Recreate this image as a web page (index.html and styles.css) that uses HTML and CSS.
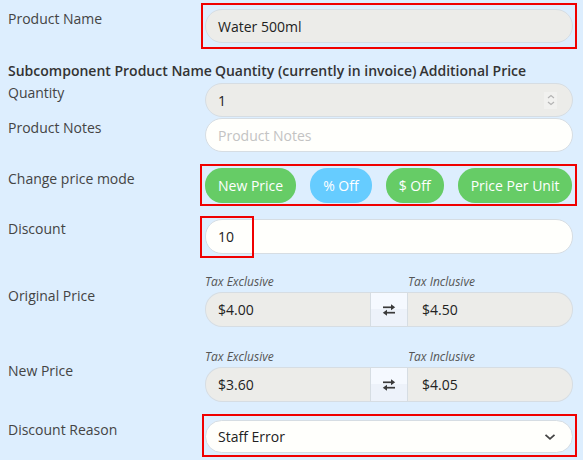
FILE: index.html
```html
<!DOCTYPE html>
<html>
<head>
<meta charset="utf-8">
<link rel="stylesheet" href="styles.css">
</head>
<body>
<div class="form">
  <div class="row r-name">
    <div class="label">Product Name</div>
    <div class="field">
      <div class="hl hl-name"><div class="input grey">Water 500ml</div></div>
    </div>
  </div>

  <div class="header">
    <span>Subcomponent Product Name</span>
    <span>Quantity (currently in invoice)</span>
    <span>Additional Price</span>
  </div>

  <div class="row r-qty">
    <div class="label">Quantity</div>
    <div class="field">
      <div class="input grey spread">
        <span>1</span>
        <span class="spin">
          <svg width="8" height="12" viewBox="0 0 8 12"><path d="M1 4 L4 1.5 L7 4 M1 8 L4 10.5 L7 8" fill="none" stroke="#b4b4b4" stroke-width="1.2"/></svg>
        </span>
      </div>
    </div>
  </div>

  <div class="row r-notes">
    <div class="label">Product Notes</div>
    <div class="field">
      <div class="input white placeholder">Product Notes</div>
    </div>
  </div>

  <div class="row r-mode">
    <div class="label">Change price mode</div>
    <div class="field">
      <div class="hl hl-mode">
        <div class="btns">
          <span class="btn green">New Price</span>
          <span class="btn blue">% Off</span>
          <span class="btn green">$ Off</span>
          <span class="btn green">Price Per Unit</span>
        </div>
      </div>
    </div>
  </div>

  <div class="row r-disc">
    <div class="label">Discount</div>
    <div class="field">
      <div class="input white disc">10<span class="hl-disc"></span></div>
    </div>
  </div>

  <div class="row r-orig">
    <div class="label">Original Price</div>
    <div class="field">
      <div class="tax-labels"><span class="tax">Tax Exclusive</span><span class="tax">Tax Inclusive</span></div>
      <div class="group">
        <div class="input grey left">$4.00</div>
        <div class="swap">
          <svg width="14" height="12" viewBox="0 0 14 12"><path d="M1 3.3 H9.5" stroke="#3a3a3a" stroke-width="1.7"/><path d="M9 0.3 L13.2 3.3 L9 6.3 Z" fill="#3a3a3a"/><path d="M13 8.7 H4.5" stroke="#3a3a3a" stroke-width="1.7"/><path d="M5 5.7 L0.8 8.7 L5 11.7 Z" fill="#3a3a3a"/></svg>
        </div>
        <div class="input grey right">$4.50</div>
      </div>
    </div>
  </div>

  <div class="row r-new">
    <div class="label">New Price</div>
    <div class="field">
      <div class="tax-labels"><span class="tax">Tax Exclusive</span><span class="tax">Tax Inclusive</span></div>
      <div class="group">
        <div class="input grey left">$3.60</div>
        <div class="swap">
          <svg width="14" height="12" viewBox="0 0 14 12"><path d="M1 3.3 H9.5" stroke="#3a3a3a" stroke-width="1.7"/><path d="M9 0.3 L13.2 3.3 L9 6.3 Z" fill="#3a3a3a"/><path d="M13 8.7 H4.5" stroke="#3a3a3a" stroke-width="1.7"/><path d="M5 5.7 L0.8 8.7 L5 11.7 Z" fill="#3a3a3a"/></svg>
        </div>
        <div class="input grey right">$4.05</div>
      </div>
    </div>
  </div>

  <div class="row r-reason">
    <div class="label">Discount Reason</div>
    <div class="field">
      <div class="hl hl-reason">
        <div class="input white spread sel">
          <span>Staff Error</span>
          <svg width="12" height="8" viewBox="0 0 12 8"><path d="M1.5 1.8 L6 5.8 L10.5 1.8" fill="none" stroke="#444" stroke-width="1.8"/></svg>
        </div>
      </div>
    </div>
  </div>
</div>
</body>
</html>
```

FILE: styles.css
```css
html, body {
  margin: 0;
  padding: 0;
  background: #ddeefe;
}
body {
  font-family: "Open Sans", "Noto Sans", sans-serif;
  font-size: 14px;
  line-height: 19px;
  color: #444;
  width: 583px;
  height: 460px;
  overflow: hidden;
}
.form {
  padding: 3px 10px 0 8px;
}
.row {
  display: flex;
}
.label {
  width: 197px;
  flex: none;
  color: #444;
}
.field {
  width: 368px;
  flex: none;
}
.input {
  box-sizing: border-box;
  height: 34px;
  border: 1px solid #d6dde3;
  border-radius: 17px;
  padding: 0 12px;
  display: flex;
  align-items: center;
  color: #222;
}
.grey { background: #ecece9; }
.white { background: #fffffc; }
.placeholder { color: #c3c3c3; }
.spread { justify-content: space-between; }

.hl {
  border: 2px solid #f00000;
}
.hl-name {
  margin: 0 -4px;
  padding: 4px 2px;
}
.r-name .label { padding-top: 6px; }

.header {
  margin-top: 12px;
  display: flex;
  gap: 3px;
  font-weight: 600;
  color: #333;
}

.r-qty { margin-top: 3px; }
.spin {
  width: 13px;
  height: 17px;
  background: #f1f1ef;
  display: flex;
  align-items: center;
  justify-content: center;
  margin-right: 3px;
}
.r-notes { margin-top: 1px; }

.r-mode { margin-top: 12px; }
.r-mode .label { padding-top: 5px; }
.hl-mode {
  margin: 0 -4px 0 -5px;
  padding: 2px 2px 1px 3px;
}
.btns {
  display: flex;
  gap: 14px;
}
.btn {
  height: 35px;
  border-radius: 17px;
  padding: 0 13px;
  display: flex;
  align-items: center;
  color: #fff;
}
.green { background: #66cc66; }
.blue { background: #66ccff; }

.r-disc { margin-top: 13px; }
.disc {
  height: 35px;
  position: relative;
}
.hl-disc {
  position: absolute;
  left: -6px;
  top: -4px;
  width: 50px;
  height: 38px;
  border: 2px solid #f00000;
}

.r-orig { margin-top: 20px; }
.r-new { margin-top: 22px; }
.r-orig .label, .r-new .label { padding-top: 12px; }
.tax-labels {
  display: flex;
  height: 16px;
  line-height: 16px;
  margin-bottom: 2px;
}
.tax {
  font-style: italic;
  font-size: 12px;
  color: #555;
}
.tax:first-child { width: 203px; }
.group {
  display: flex;
  height: 35px;
}
.group .input {
  height: 35px;
}
.left {
  width: 165px;
  border-radius: 17px 0 0 17px;
  border-right: none;
}
.right {
  flex: 1;
  border-radius: 0 17px 17px 0;
  border-left: none;
  padding-left: 14px;
}
.swap {
  box-sizing: border-box;
  width: 38px;
  border: 1px solid #d6dde3;
  background: linear-gradient(#f5f9ff 0, #f5f9ff 50%, #edf2fa 50%, #edf2fa 100%);
  display: flex;
  align-items: center;
  justify-content: center;
}

.r-reason { margin-top: 12px; }
.r-reason .label { padding-top: 6px; }
.hl-reason {
  margin: 0 -4px 0 -3px;
  padding: 4px 2px 2px 1px;
}
.sel {
  height: 33px;
  padding-right: 16px;
}
```
